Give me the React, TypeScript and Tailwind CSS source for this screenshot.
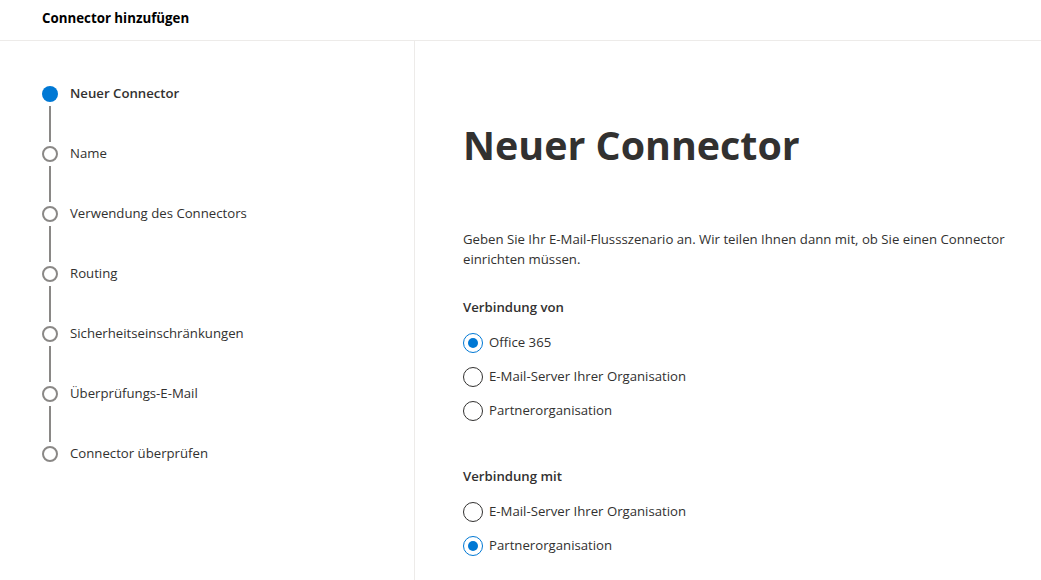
const steps = [
  "Neuer Connector",
  "Name",
  "Verwendung des Connectors",
  "Routing",
  "Sicherheitseinschränkungen",
  "Überprüfungs-E-Mail",
  "Connector überprüfen",
];

function Radio({ label, checked }: { label: string; checked?: boolean }) {
  return (
    <div className="flex h-[34px] items-center gap-[6px]">
      <span
        className={`flex h-[20px] w-[20px] items-center justify-center rounded-full border ${
          checked ? "border-[#0078d4]" : "border-[#323130]"
        }`}
      >
        {checked ? <span className="h-[10px] w-[10px] rounded-full bg-[#0078d4]" /> : null}
      </span>
      <span className="text-[13.2px] text-[#323130]">{label}</span>
    </div>
  );
}

export default function App() {
  return (
    <div
      className="flex h-[580px] w-[1041px] flex-col overflow-hidden bg-white text-[#323130]"
      style={{ fontFamily: '"Open Sans", "Noto Sans", sans-serif' }}
    >
      <header className="flex h-[41px] shrink-0 items-center border-b border-[#edebe9] pb-[3px] pl-[42px]">
        <h1 className="text-[13.3px] font-bold text-black">Connector hinzufügen</h1>
      </header>
      <div className="flex flex-1">
        {/* stepper */}
        <nav className="w-[415px] shrink-0 border-r border-[#edebe9] pl-[42px] pt-[44px]">
          {steps.map((s, i) => (
            <div key={s} className="flex flex-col">
              <div className="flex h-[18px] items-center gap-[12px]">
                {i === 0 ? (
                  <span className="h-[16px] w-[16px] rounded-full bg-[#0078d4]" />
                ) : (
                  <span className="h-[16px] w-[16px] rounded-full border-2 border-[#8a8886]" />
                )}
                <span className={`text-[13.2px] ${i === 0 ? "font-semibold" : ""}`}>{s}</span>
              </div>
              {i < steps.length - 1 ? (
                <div className="ml-[7px] my-[3px] h-[36px] w-[2px] bg-[#8a8886]" />
              ) : null}
            </div>
          ))}
        </nav>
        {/* content */}
        <main className="flex-1 pl-[48px] pt-[78px]">
          <h2 className="text-[39.4px] font-bold leading-[52px]">Neuer Connector</h2>
          <p className="mt-[58px] text-[13.2px] leading-[20px]">
            Geben Sie Ihr E-Mail-Flussszenario an. Wir teilen Ihnen dann mit, ob Sie einen Connector
            <br />
            einrichten müssen.
          </p>
          <h3 className="mt-[28px] text-[13.2px] font-semibold leading-[20px]">Verbindung von</h3>
          <div className="mt-[9px]">
            <Radio label="Office 365" checked />
            <Radio label="E-Mail-Server Ihrer Organisation" />
            <Radio label="Partnerorganisation" />
          </div>
          <h3 className="mt-[38px] text-[13.2px] font-semibold leading-[20px]">Verbindung mit</h3>
          <div className="mt-[9px]">
            <Radio label="E-Mail-Server Ihrer Organisation" />
            <Radio label="Partnerorganisation" checked />
          </div>
        </main>
      </div>
    </div>
  );
}
